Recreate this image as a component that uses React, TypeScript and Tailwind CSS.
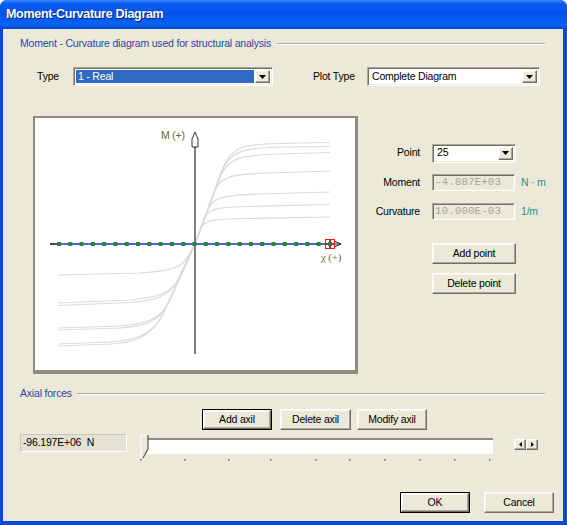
import React from "react";

const ui = "font-['Liberation_Sans',Arial,sans-serif] text-[10.5px] tracking-[-0.2px] text-black";

// classic 3D edges
const raised =
  "border border-t-white border-l-white border-r-[#716f64] border-b-[#716f64] shadow-[inset_-1px_-1px_0_#aca899,inset_1px_1px_0_#f7f6ee]";
const sunken =
  "border border-t-[#aca899] border-l-[#aca899] border-r-white border-b-white shadow-[inset_1px_1px_0_#716f64,inset_-1px_-1px_0_#f1efe2]";

function DownArrow() {
  return (
    <svg width="7" height="4" viewBox="0 0 7 4">
      <polygon points="0,0 7,0 3.5,4" fill="#000" />
    </svg>
  );
}

function Combo({ value, width, highlight }: { value: string; width: string; highlight?: boolean }) {
  return (
    <div className={`flex h-[19px] ${width} bg-white p-[2px] ${sunken}`}>
      <div
        className={`flex flex-1 items-center pl-[2px] ${
          highlight ? "bg-[#316ac5] text-white" : ""
        }`}
      >
        {value}
      </div>
      <div className={`ml-[1px] flex w-[15px] items-center justify-center bg-[#ece9d8] ${raised}`}>
        <DownArrow />
      </div>
    </div>
  );
}

function Btn({ label, width, def }: { label: string; width: string; def?: boolean }) {
  const face = (
    <div className={`flex h-full w-full items-center justify-center bg-[#ece9d8] ${raised}`}>{label}</div>
  );
  return <div className={`${width} h-[21px] ${def ? "border border-black" : ""}`}>{face}</div>;
}

function GroupHeader({ title, gap }: { title: string; gap: string }) {
  return (
    <div className="flex h-[13px] items-center pl-[17px] pr-[18px]">
      <span className={`text-[#2c45a0] ${gap}`}>{title}</span>
      <div className="h-[2px] flex-1 border-t border-b border-t-[#aca899] border-b-white" />
    </div>
  );
}

function ReadOnly({ value }: { value: string }) {
  return (
    <div
      className={`flex h-[17px] w-[83px] items-center bg-[#ece9d8] pl-[2px] font-['Liberation_Mono',monospace] text-[11px] tracking-normal text-[#a9a69a] ${sunken}`}
    >
      {value}
    </div>
  );
}

// moment-curvature branches, coordinates inside the white plot area
const upper = [
  "M160 126 L188 50 C196 28 210 26 245 25.5 L295 24.5",
  "M160 126 L186 55 C194 33 208 30 245 29 L295 28.5",
  "M160 126 L184 62 C191 40 205 37 245 36 L295 34.5",
  "M160 126 L180 72 C186 58 198 56 235 55 L295 53",
  "M160 126 L173 91 C178 79 190 77 225 76 L295 74",
  "M160 126 L170 99 C175 90 185 89 215 88.5 L295 86.5",
  "M160 126 L166 110 C170 102 180 101 210 100.5 L295 99",
];
const lower = [
  "M160 126 L152 140 C146 150 135 153 105 155 L23 157",
  "M160 126 L143 162 C135 176 120 180 95 182 L23 185",
  "M160 126 L142 164 C133 179 118 183 95 184.5 L23 187.5",
  "M160 126 L135 182 C126 202 110 206 85 208 L23 210",
  "M160 126 L134 184 C124 205 108 208.5 85 210 L23 212",
  "M160 126 L128 196 C117 218 100 222 75 224 L23 226",
  "M160 126 L127 198 C115 220 98 224.5 75 226 L23 228",
];

function Chart() {
  const pts = Array.from({ length: 25 }, (_, i) => 24 + i * 11.29);
  return (
    <svg width="320" height="252" viewBox="0 0 320 252">
      {[...upper, ...lower].map((d, i) => (
        <path key={i} d={d} fill="none" stroke="#dadada" strokeWidth="1.2" />
      ))}
      {/* M axis */}
      <line x1="160" y1="28" x2="160" y2="236" stroke="#555" strokeWidth="1.5" />
      <polygon points="160,14 163,21 163,29 157,29 157,21" fill="#fff" stroke="#333" strokeWidth="1" />
      <text x="126" y="21" fontSize="10.5" fill="#6b6b2a" fontFamily="Liberation Sans, Arial, sans-serif">
        M (+)
      </text>
      {/* curvature axis */}
      <line x1="15" y1="126" x2="22" y2="126" stroke="#111" strokeWidth="1.5" />
      <line x1="22" y1="126" x2="298" y2="126" stroke="#2323d6" strokeWidth="1.5" />
      <line x1="298" y1="126" x2="306" y2="126" stroke="#222" strokeWidth="1" />
      <polyline points="299,123 306,126 299,129" fill="none" stroke="#222" strokeWidth="1" />
      {pts.map((x, i) => (
        <rect key={i} x={x - 2} y={124} width="4" height="4" fill="#1f8a35" />
      ))}
      <g fill="none" stroke="#d42020" strokeWidth="1">
        <rect x="290.5" y="121.5" width="4" height="4" />
        <rect x="295.5" y="121.5" width="4" height="4" />
        <rect x="290.5" y="126.5" width="4" height="4" />
        <rect x="295.5" y="126.5" width="4" height="4" />
      </g>
      <rect x="293" y="124" width="4" height="4" fill="#1f8a35" />
      <text x="286" y="143" fontSize="11" fill="#6b6b2a" fontFamily="Liberation Serif, serif">
        χ (+)
      </text>
    </svg>
  );
}

function SliderThumb() {
  return (
    <svg width="10" height="25" viewBox="0 0 10 25" className="absolute left-0 top-0">
      <polygon points="1,1 8,1 8,15 3,24 1,24" fill="#ece9d8" />
      <polyline points="1,24 1,1 8,1" fill="none" stroke="#fff" strokeWidth="1" />
      <polyline points="8,1 8,15 3,24" fill="none" stroke="#555" strokeWidth="1.2" />
    </svg>
  );
}

function SpinArrow({ dir }: { dir: "left" | "right" }) {
  return (
    <div className={`flex h-[11px] w-[12px] items-center justify-center bg-[#ece9d8] ${raised}`}>
      <svg width="3" height="5" viewBox="0 0 3 5">
        <polygon points={dir === "left" ? "3,0 3,5 0,2.5" : "0,0 0,5 3,2.5"} fill="#000" />
      </svg>
    </div>
  );
}

const ticks = [137, 181, 225, 267, 312, 346, 381, 416, 451, 486];

export default function App() {
  return (
    <div className="h-[525px] w-[567px] bg-white">
      <div className={`flex h-[525px] w-[567px] flex-col overflow-hidden rounded-t-[7px] bg-[#0b49dc] ${ui}`}>
        {/* title bar */}
        <div className="flex h-[29px] shrink-0 items-center bg-[linear-gradient(to_bottom,#3c8cff_0%,#0b5cf0_12%,#0053ea_45%,#0a62f6_85%,#0356e8_93%,#0340cf_100%)] pl-[6px]">
          <span className="font-['Liberation_Sans',Arial,sans-serif] text-[12.5px] font-bold tracking-[-0.3px] text-white [text-shadow:1px_1px_0_#0a1f7a]">
            Moment-Curvature Diagram
          </span>
        </div>

        {/* client area */}
        <div className="mb-[4px] ml-[3px] mr-[4px] flex flex-1 flex-col bg-[#ece9d8]">
          <div className="mt-[8px]">
            <GroupHeader title="Moment - Curvature diagram used for structural analysis" gap="pr-[6px]" />
          </div>

          <div className="mt-[17px] flex h-[19px] items-center">
            <span className="ml-[34px] w-[36px]">Type</span>
            <Combo value="1 - Real" width="w-[200px]" highlight />
            <span className="ml-[40px] w-[54px]">Plot Type</span>
            <Combo value="Complete Diagram" width="w-[173px]" />
          </div>

          <div className="mt-[30px] flex h-[258px]">
            <div className="ml-[30px] h-[258px] w-[325px] border-t-2 border-l-2 border-r-[3px] border-b-[4px] border-[#8d8b82] bg-white">
              <Chart />
            </div>

            <div className="ml-[12px] flex flex-col">
              <div className="mt-[28px] flex h-[18px] items-center">
                <span className="w-[50px] text-right">Point</span>
                <div className="ml-[12px]">
                  <Combo value="25" width="w-[84px]" />
                </div>
              </div>
              <div className="mt-[12px] flex h-[17px] items-center">
                <span className="w-[50px] text-right">Moment</span>
                <div className="ml-[12px]">
                  <ReadOnly value="-4.887E+03" />
                </div>
                <span className="ml-[6px] text-[#2a8c8c]">N · m</span>
              </div>
              <div className="mt-[12px] flex h-[17px] items-center">
                <span className="w-[50px] text-right">Curvature</span>
                <div className="ml-[12px]">
                  <ReadOnly value="10.000E-03" />
                </div>
                <span className="ml-[6px] text-[#2a8c8c]">1/m</span>
              </div>
              <div className="ml-[62px] mt-[23px]">
                <Btn label="Add point" width="w-[84px]" />
              </div>
              <div className="ml-[62px] mt-[9px]">
                <Btn label="Delete point" width="w-[84px]" />
              </div>
            </div>
          </div>

          <div className="mt-[13px]">
            <GroupHeader title="Axial forces" gap="pr-[5px]" />
          </div>

          <div className="mt-[9px] flex h-[21px] pl-[199px]">
            <Btn label="Add axil" width="w-[70px]" def />
            <div className="ml-[8px]">
              <Btn label="Delete axil" width="w-[71px]" />
            </div>
            <div className="ml-[6px]">
              <Btn label="Modify axil" width="w-[70px]" />
            </div>
          </div>

          <div className="mt-[4px] flex h-[20px]">
            <div className="ml-[17px] flex h-[18px] w-[107px] items-center whitespace-pre border border-t-[#c9c6b6] border-l-[#c9c6b6] border-r-white border-b-white bg-[#e4e1d2] pl-[2px]">
              -96.197E+06  N
            </div>
            <div className="relative ml-[13px] h-[25px] w-[353px]">
              <div className="ml-[5px] mt-[4px] h-[16px] w-[348px] border-t-2 border-l border-t-[#8d8b82] border-l-[#aca899] bg-white" />
              <SliderThumb />
            </div>
            <div className="ml-[21px] mt-[5px] flex">
              <SpinArrow dir="left" />
              <SpinArrow dir="right" />
            </div>
          </div>

          <div className="mt-[5px] h-[3px]">
            <svg width="560" height="3" viewBox="0 0 560 3">
              {ticks.map((x) => (
                <rect key={x} x={x} y={0} width="1.5" height="1.5" fill="#6a6a6a" />
              ))}
            </svg>
          </div>

          <div className="mt-[30px] flex h-[21px]">
            <div className="ml-[397px]">
              <Btn label="OK" width="w-[70px]" def />
            </div>
            <div className="ml-[14px]">
              <Btn label="Cancel" width="w-[70px]" />
            </div>
          </div>
        </div>
      </div>
    </div>
  );
}
